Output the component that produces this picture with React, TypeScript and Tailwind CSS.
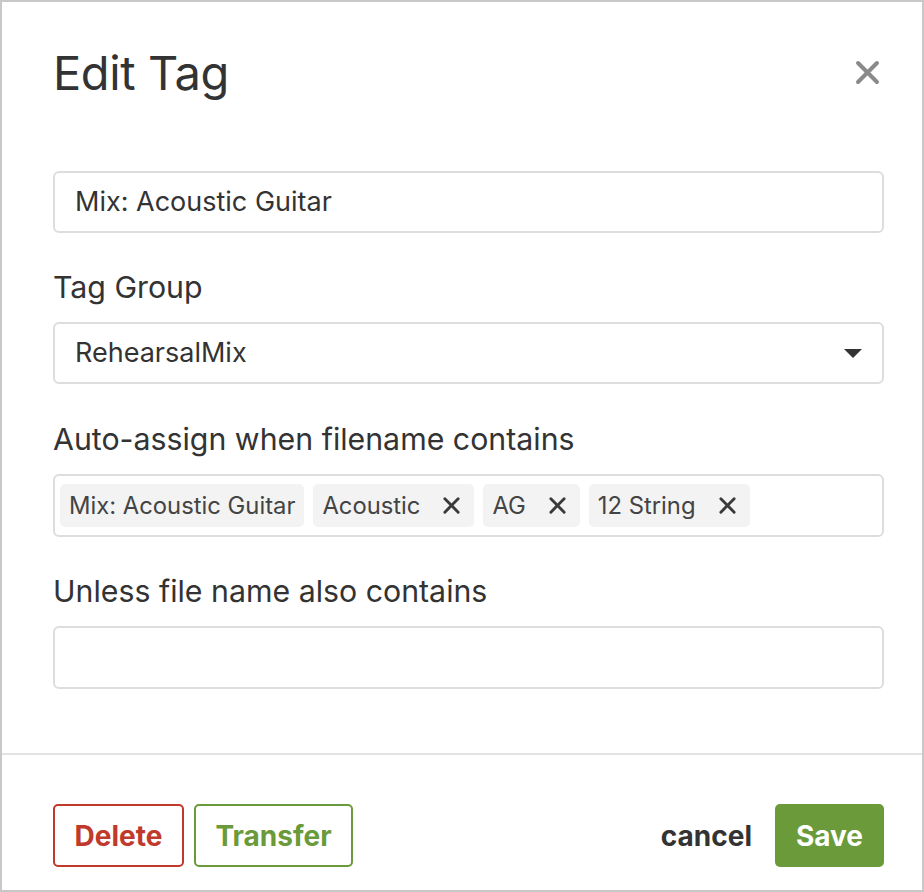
import React from "react";

const font = { fontFamily: "Inter, 'Noto Sans', 'Liberation Sans', sans-serif" };

function XIcon({ className = "" }: { className?: string }) {
  return (
    <svg viewBox="0 0 20 20" className={className} fill="none" stroke="currentColor" strokeWidth={3} strokeLinecap="round">
      <path d="M3 3 L17 17 M17 3 L3 17" />
    </svg>
  );
}

function Tag({ label, removable = true }: { label: string; removable?: boolean }) {
  return (
    <div className="flex items-center h-[43px] rounded-[5px] bg-[#f3f3f3] pl-[9px] pr-[13px] text-[23.8px] text-[#444]">
      <span className={removable ? "" : "mr-[-4px]"}>{label}</span>
      {removable && <XIcon className="w-[19px] h-[19px] ml-[22px] text-[#3a3a3a]" />}
    </div>
  );
}

export default function App() {
  return (
    <div style={font} className="w-[924px] h-[892px] border-2 border-[#c8c8c8] bg-white flex flex-col text-[#333]">
      <div className="pl-[51px] pr-[41px] pt-[40px] flex items-center justify-between h-[102px]">
        <h1 className="text-[47px] leading-[60px] font-normal text-[#333] tracking-[-0.4px]">Edit Tag</h1>
        <XIcon className="w-[27px] h-[27px] text-[#8a8a8a] mt-[-2px]" />
      </div>

      <div className="pl-[51px] pr-[38px] flex flex-col">
        <div className="mt-[67px] h-[62px] rounded-[6px] border-2 border-[#dddddd] flex items-center pl-[20px] text-[27px]">
          Mix: Acoustic Guitar
        </div>

        <label className="mt-[37px] h-[34px] leading-[34px] text-[30.3px]">Tag Group</label>
        <div className="mt-[18px] h-[62px] rounded-[6px] border-2 border-[#dddddd] flex items-center justify-between pl-[20px] pr-[20px] text-[27px]">
          <span>RehearsalMix</span>
          <svg viewBox="0 0 18 9" className="w-[18px] h-[9px]">
            <path d="M0 0 H18 L9 9 Z" fill="#333" />
          </svg>
        </div>

        <label className="mt-[38px] h-[34px] leading-[34px] text-[30.3px]">Auto-assign when filename contains</label>
        <div className="mt-[18px] h-[63px] rounded-[6px] border-2 border-[#dddddd] flex items-center gap-[9px] pl-[5px]">
          <Tag label="Mix: Acoustic Guitar" removable={false} />
          <Tag label="Acoustic" />
          <Tag label="AG" />
          <Tag label="12 String" />
        </div>

        <label className="mt-[37px] h-[34px] leading-[34px] text-[30.3px]">Unless file name also contains</label>
        <div className="mt-[18px] h-[63px] rounded-[6px] border-2 border-[#dddddd]"></div>
      </div>

      <div className="mt-[64px] border-t-2 border-[#e3e3e3]"></div>

      <div className="pl-[51px] pr-[38px] mt-[49px] flex items-center justify-between">
        <div className="flex gap-[10px]">
          <button className="h-[63px] w-[131px] rounded-[5px] border-2 border-[#c0392b] text-[#c0392b] font-bold text-[28px]">
            Delete
          </button>
          <button className="h-[63px] w-[159px] rounded-[5px] border-2 border-[#6a9a3a] text-[#6a9a3a] font-bold text-[28px]">
            Transfer
          </button>
        </div>
        <div className="flex items-center gap-[23px]">
          <span className="font-bold text-[28px] text-[#333]">cancel</span>
          <button className="h-[63px] w-[109px] rounded-[5px] bg-[#6a9a3a] text-white font-bold text-[28px]">
            Save
          </button>
        </div>
      </div>
    </div>
  );
}
